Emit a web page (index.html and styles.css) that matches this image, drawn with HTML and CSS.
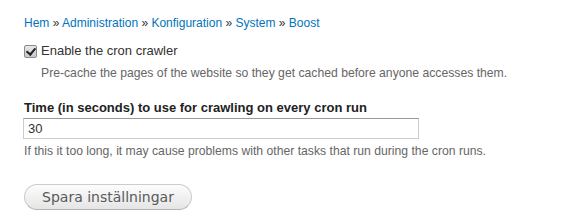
FILE: index.html
```html
<!DOCTYPE html>
<html lang="sv">
<head>
<meta charset="UTF-8">
<title>Boost</title>
<link rel="stylesheet" href="styles.css">
</head>
<body>
<div class="page">
  <div class="breadcrumb">
    <a href="#">Hem</a> » <a href="#">Administration</a> » <a href="#">Konfiguration</a> » <a href="#">System</a> » <a href="#">Boost</a>
  </div>
  <form class="settings">
    <div class="form-item form-checkbox">
      <input type="checkbox" id="cron" checked>
      <label for="cron" class="option">Enable the cron crawler</label>
      <div class="description">Pre-cache the pages of the website so they get cached before anyone accesses them.</div>
    </div>
    <div class="form-item form-text">
      <label for="time">Time (in seconds) to use for crawling on every cron run</label>
      <input type="text" id="time" value="30">
      <div class="description">If this it too long, it may cause problems with other tasks that run during the cron runs.</div>
    </div>
    <div class="form-actions">
      <button type="button" class="form-submit">Spara inställningar</button>
    </div>
  </form>
</div>
</body>
</html>
```
FILE: styles.css
```css
html, body { margin:0; padding:0; background:#fff; }
body { font-family:"Liberation Sans",Arial,sans-serif; font-size:13px; color:#333; }
.page { padding:14px 24px 0; }
.breadcrumb { font-size:12px; line-height:18px; color:#333; }
.breadcrumb a { color:#0074bd; text-decoration:none; }
.settings { margin:0; }
.form-item { margin:0; }
.form-checkbox { margin-top:11px; display:grid; grid-template-columns:17px 1fr; align-items:center; }
.form-checkbox input { appearance:none; -webkit-appearance:none; position:relative; margin:0; width:13px; height:13px; border:1px solid #8a8a8a; border-radius:2px; background:linear-gradient(#e8e8e8,#c8c8c8); box-sizing:border-box; }
.form-checkbox input:checked:after { content:''; position:absolute; left:3px; top:0; width:4px; height:7px; border:solid #222; border-width:0 2px 2px 0; transform:rotate(40deg); }
.form-checkbox label { font-size:13px; line-height:16px; color:#333; }
.form-checkbox .description { grid-column:2; margin-top:7px; }
.description { font-size:12.2px; line-height:15px; color:#666; }
.form-text { margin-top:19px; }
.form-text label { display:block; font-weight:bold; font-size:13px; line-height:16px; color:#222; margin-bottom:2px; }
.form-text input { display:block; box-sizing:border-box; width:396px; height:21px; margin:0 0 0 -1px; padding:1px 4px; border:1px solid #ccc; border-top-color:#999; font:13px "Liberation Sans",Arial,sans-serif; color:#333; }
.form-text .description { margin-top:5px; }
.form-actions { margin-top:25px; }
.form-submit { box-sizing:border-box; width:168px; height:26px; border:1px solid #ccc; border-bottom-color:#b4b4b4; border-radius:20px; background:linear-gradient(#fdfdfd,#e5e5e5); font:14px "DejaVu Sans",Verdana,sans-serif; color:#5a5a5a; padding:0; cursor:pointer; }
```
